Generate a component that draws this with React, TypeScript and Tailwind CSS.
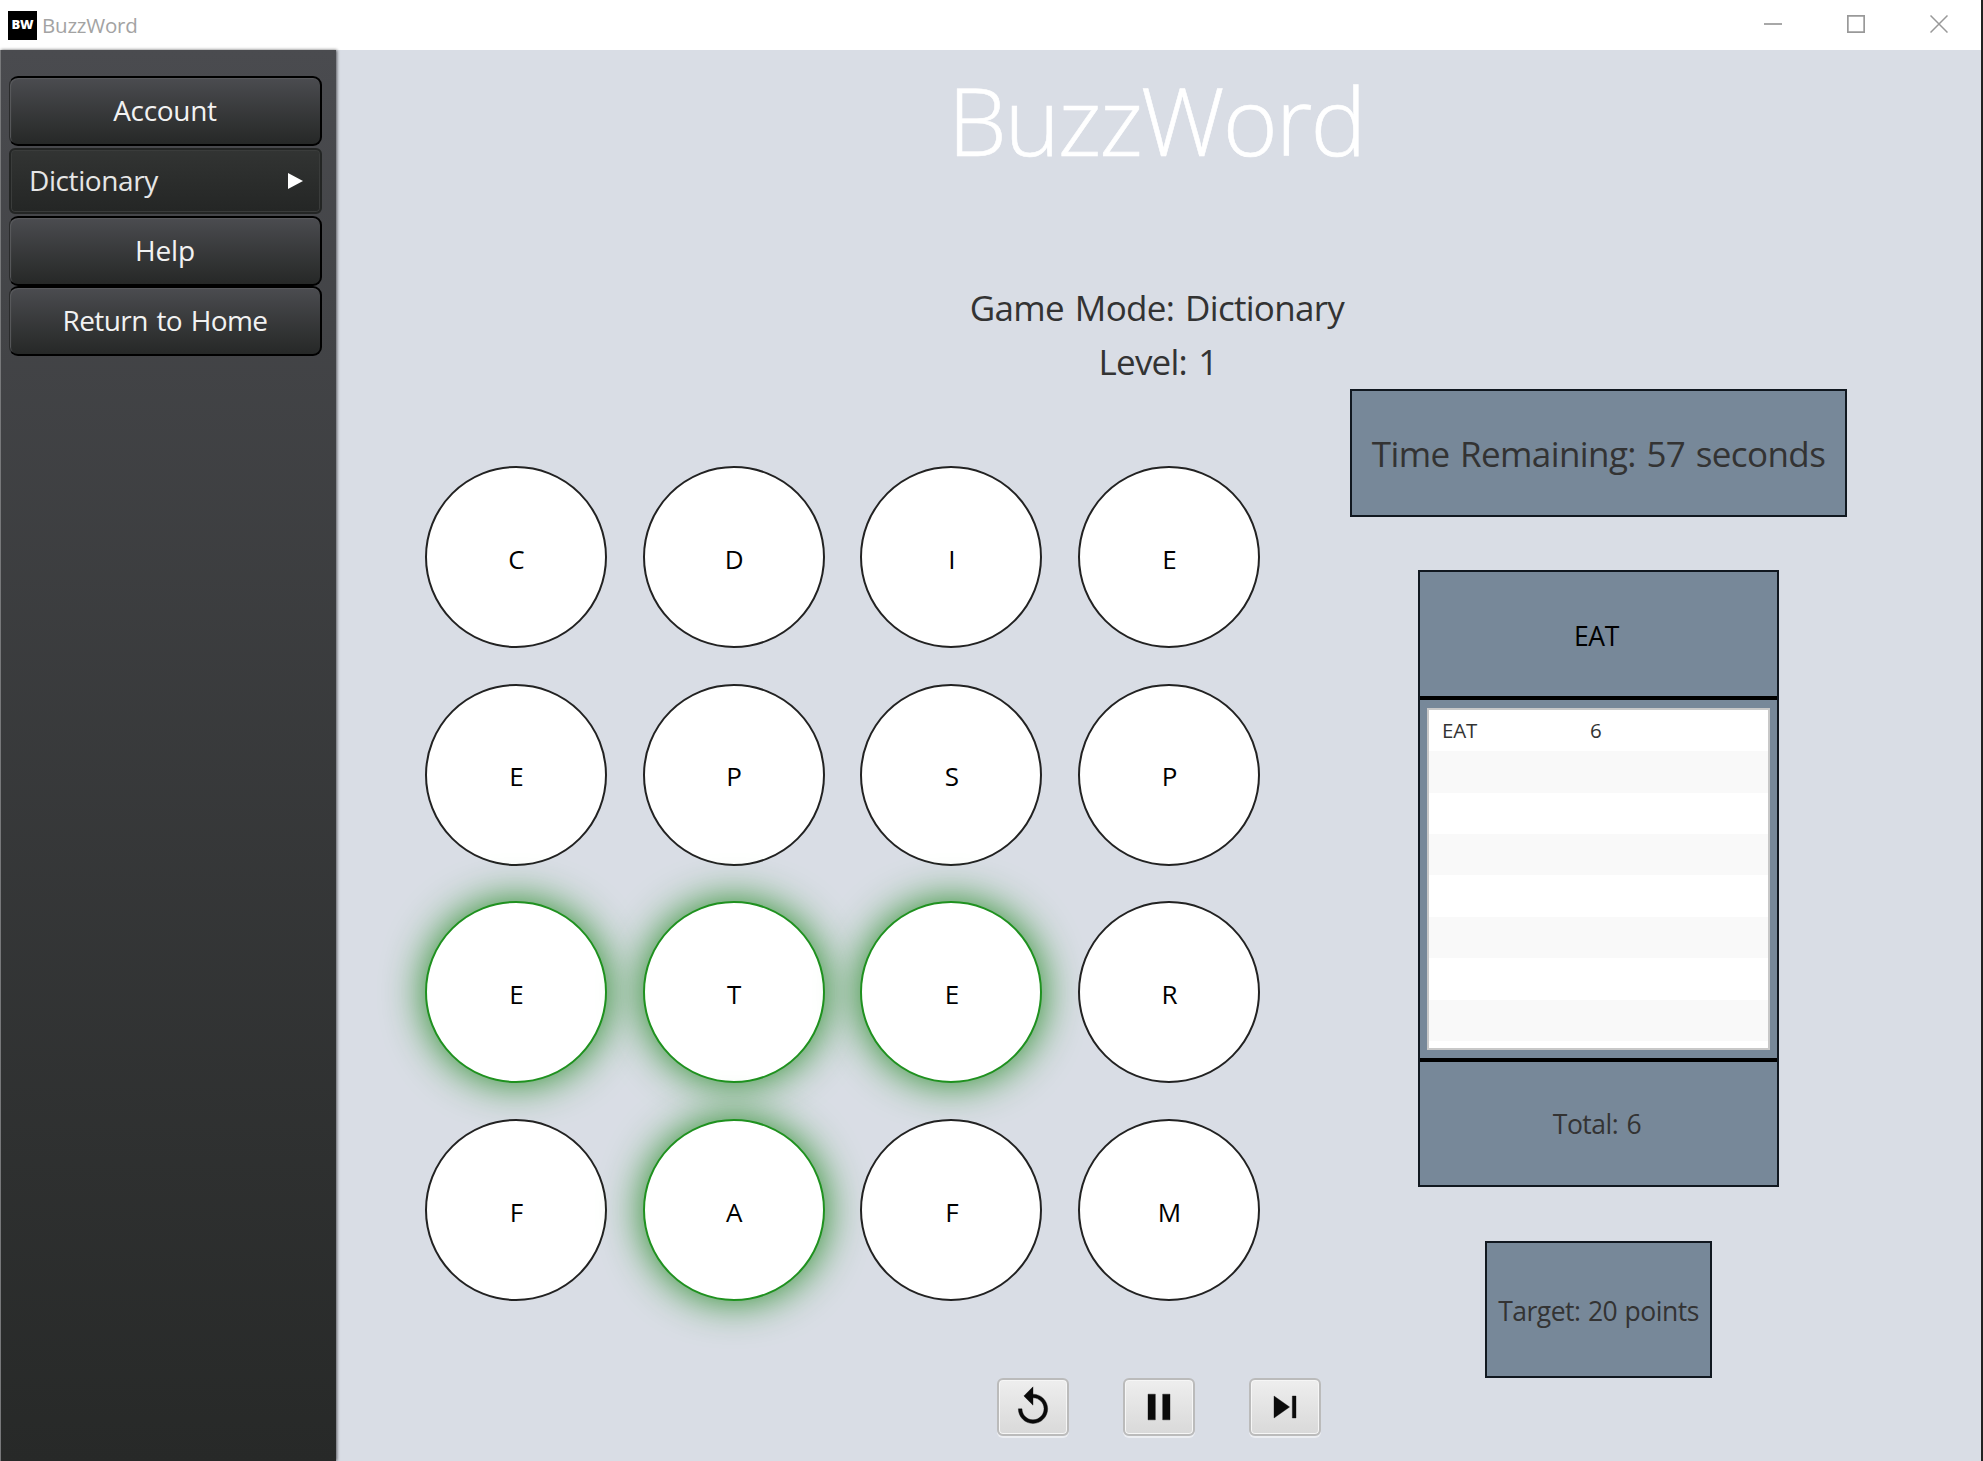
import type { ReactNode } from "react";
import clsx from "clsx";

type Tile = { letter: string; active?: boolean };

const tiles: Tile[] = [
  { letter: "C" }, { letter: "D" }, { letter: "I" }, { letter: "E" },
  { letter: "E" }, { letter: "P" }, { letter: "S" }, { letter: "P" },
  { letter: "E", active: true }, { letter: "T", active: true }, { letter: "E", active: true }, { letter: "R" },
  { letter: "F" }, { letter: "A", active: true }, { letter: "F" }, { letter: "M" },
];

const rows = [["EAT", "6"], [], [], [], [], [], [], []];

function TitleBar() {
  return (
    <header className="flex h-[50px] shrink-0 items-center bg-white">
      <div className="ml-2 flex size-[29px] items-center justify-center bg-black pb-px text-[13px] leading-none font-extrabold tracking-[-0.2px] text-white">
        BW
      </div>
      <span className="ml-[5px] pt-px text-[20.5px] leading-none tracking-[-0.2px] text-[#a3a3a3]">BuzzWord</span>
      <div className="mr-[33px] ml-auto flex items-center gap-[65px] pb-0.5 text-[#999]">
        <svg width="18" height="18" viewBox="0 0 18 18" stroke="currentColor" strokeWidth="1.7" fill="none">
          <path d="M0 9h18" />
        </svg>
        <svg width="18" height="18" viewBox="0 0 18 18" stroke="currentColor" strokeWidth="1.7" fill="none">
          <path d="M.85.85h16.3v16.3H.85z" />
        </svg>
        <svg width="18" height="18" viewBox="0 0 18 18" stroke="currentColor" strokeWidth="1.5" fill="none">
          <path d="M.5.5l17 17M17.5.5l-17 17" />
        </svg>
      </div>
    </header>
  );
}

function MenuButton({ children, className }: { children: ReactNode; className?: string }) {
  return (
    <button
      className={clsx(
        "flex h-[70px] w-full items-center justify-center rounded-[9px] border-2 border-l border-black border-l-[#2a2b2c] bg-linear-to-b from-[#4b4c50] to-[#262827] pb-0.5 text-[28px] leading-none text-[#f2f2f2] shadow-[inset_1px_1px_1px_#5a5b5e]",
        className,
      )}
    >
      {children}
    </button>
  );
}

function Sidebar() {
  return (
    <nav className="z-10 flex w-[336px] shrink-0 flex-col border-l border-[#77787a] bg-linear-to-b from-[#4a4b4f] to-[#272928] pt-[26px] pr-[14px] pl-2 shadow-[1px_0_3px_rgba(0,0,0,0.6)]">
      <MenuButton className="tracking-[-0.3px]">Account</MenuButton>
      <button className="my-[2px] flex h-[66px] w-full items-center justify-between rounded-md border-2 border-[#232524] bg-linear-to-b from-[#323433] to-[#242625] pr-[17px] pb-0.5 pl-[18px] text-[28px] leading-none tracking-[-0.4px] text-[#e6e6e6] shadow-[inset_0_0_0_1px_#3a3c3b]">
        Dictionary
        <svg className="mt-0.5" width="15" height="16" viewBox="0 0 15 16" fill="#fff">
          <path d="M0 0l15 8-15 8z" />
        </svg>
      </button>
      <MenuButton className="tracking-[-0.2px]">Help</MenuButton>
      <MenuButton className="tracking-[-0.6px] [word-spacing:2px]">Return to Home</MenuButton>
    </nav>
  );
}

function Board() {
  return (
    <div className="mt-[77px] ml-[89px] grid h-[836px] grid-cols-[repeat(4,182px)] grid-rows-[repeat(4,182px)] gap-[35.7px]">
      {tiles.map((tile, i) => (
        <div
          key={i}
          className={clsx(
            "flex items-center justify-center rounded-full border-2 bg-white pt-[3px] pl-px text-[26px] leading-none text-black",
            tile.active
              ? "border-[#1f911f] shadow-[0_0_42px_rgb(34,139,34)]"
              : "border-[#222]",
          )}
        >
          {tile.letter}
        </div>
      ))}
    </div>
  );
}

function ScorePanel() {
  return (
    <section className="mt-[53px] flex h-[618px] w-[361px] flex-col border-2 border-[#111820] bg-[#778899]">
      <div className="flex h-[124px] items-center justify-center pt-1 pr-1 text-[26.5px] leading-none tracking-[-0.4px] text-black">EAT</div>
      <div className="h-[366px] border-y-4 border-black px-[7px] py-2">
        <div className="h-[342px] border-2 border-[#c8c8c8] bg-white text-[20.5px] leading-none text-[#333]">
          {rows.map(([word, points], i) => (
            <div key={i} className="flex h-[41.4px] items-center pl-[13px] odd:bg-white even:bg-[#f9f9f9]">
              <span className="w-[148px] tracking-[-0.2px]">{word}</span>
              <span>{points}</span>
            </div>
          ))}
        </div>
      </div>
      <div className="flex grow items-center justify-center pt-0.5 pr-[3px] text-[26.5px] leading-none tracking-[-0.5px] text-[#333] [word-spacing:2px]">Total: 6</div>
    </section>
  );
}

function ControlButton({ d }: { d: string }) {
  return (
    <button className="flex h-[58px] w-[72px] items-center justify-center rounded-md border-2 border-[#bbb] bg-linear-to-b from-[#eee] to-[#d9d9d9] shadow-[0_2px_0_#eceef2,inset_0_0_0_1px_#f6f6f6]">
      <svg className="shrink-0" width="44" height="44" viewBox="0 0 24 24" fill="#0a0a0a" stroke="#0a0a0a" strokeWidth="0.2">
        <path d={d} />
      </svg>
    </button>
  );
}

function Game() {
  return (
    <main className="flex grow flex-col bg-[#d9dde5] text-[#333]">
      <h1 className="flex h-[146px] items-center justify-center pr-[5px] pb-[7px] text-[94px] leading-none font-light tracking-[-2px] text-white [-webkit-text-stroke:0.6px_#fff]">
        BuzzWord
      </h1>
      <div className="mt-[85px] flex h-[108px] flex-col items-center pr-[3px] text-[35px] leading-[54px]">
        <p className="tracking-[-0.7px] [word-spacing:2.5px]">Game Mode: Dictionary</p>
        <p className="pl-0.5 tracking-[-0.8px] [word-spacing:3px]">Level: 1</p>
      </div>
      <div className="flex h-[989px] justify-between">
        <Board />
        <aside className="mr-[134px] flex flex-col items-center">
          <div className="flex h-[128px] w-[497px] items-center justify-center border-2 border-[#111820] bg-[#778899] pt-px text-[35px] leading-none tracking-[-0.6px] [word-spacing:2px]">
            Time Remaining: 57 seconds
          </div>
          <ScorePanel />
          <div className="mt-[54px] flex h-[137px] w-[227px] items-center justify-center border-2 border-[#111820] bg-[#778899] pt-[3px] text-[26.5px] leading-none tracking-[-0.5px] [word-spacing:1px]">
            Target: 20 points
          </div>
        </aside>
      </div>
      <div className="flex justify-center gap-[54px]">
        <ControlButton d="M12 5V1L7 6l5 5V7c3.31 0 6 2.69 6 6s-2.69 6-6 6-6-2.69-6-6H4c0 4.42 3.58 8 8 8s8-3.58 8-8-3.58-8-8-8z" />
        <ControlButton d="M6 19h4V5H6v14zm8-14v14h4V5h-4z" />
        <ControlButton d="M6 18l8.5-6L6 6v12zM16 6v12h2V6h-2z" />
      </div>
    </main>
  );
}

export default function App() {
  return (
    <div className="flex h-[1461px] w-[1983px] flex-col overflow-hidden border-r-2 border-[#222] font-['Open_Sans','Noto_Sans',sans-serif]">
      <TitleBar />
      <div className="flex grow">
        <Sidebar />
        <Game />
      </div>
    </div>
  );
}
